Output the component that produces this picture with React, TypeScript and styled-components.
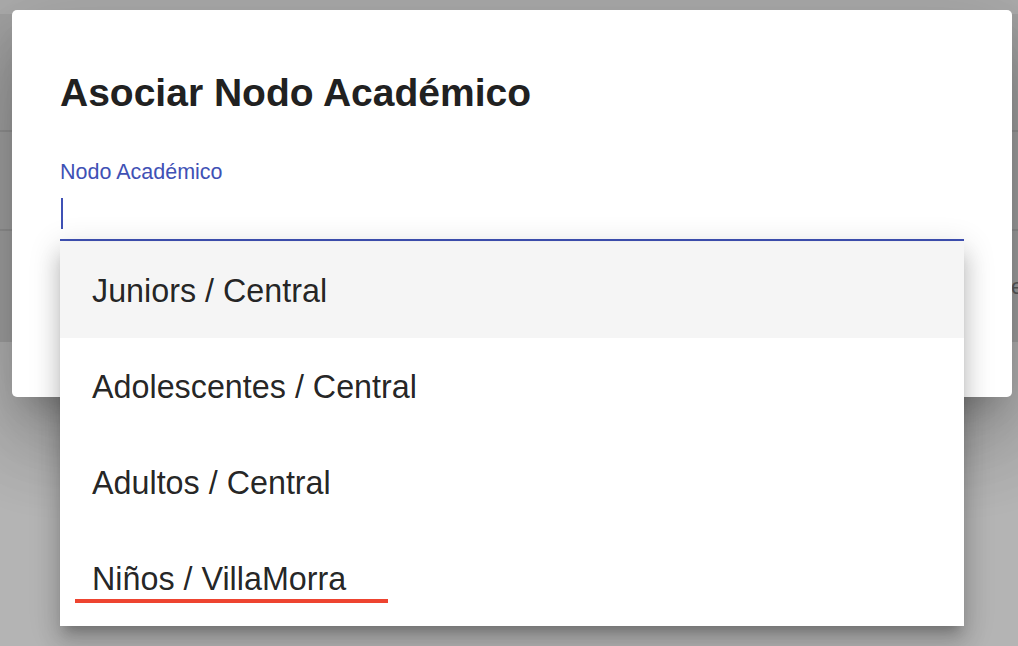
import React from "react";
import styled, { createGlobalStyle } from "styled-components";

const GlobalStyle = createGlobalStyle`
  html, body {
    margin: 0;
    padding: 0;
    width: 1018px;
    height: 646px;
    overflow: hidden;
    background: #b4b4b4;
    font-family: "Liberation Sans", Arial, Helvetica, sans-serif;
  }
  * { box-sizing: border-box; }
`;

const Screen = styled.div`
  position: relative;
  width: 1018px;
  height: 646px;
  overflow: hidden;
  background: #b4b4b4;
`;

/* Dimmed page behind the modal */
const BehindPage = styled.div`
  display: flex;
  flex-direction: column;
`;

const BehindTop = styled.div`
  height: 14px;
  background: #adadad;
`;

const BehindPanel = styled.div`
  display: flex;
  flex-direction: column;
  background: #a2a2a2;
`;

const BehindRow = styled.div<{ $h: number; $line?: boolean }>`
  height: ${(p) => p.$h}px;
  border-bottom: ${(p) => (p.$line ? "2px solid #939393" : "none")};
  display: flex;
  align-items: center;
  padding-left: 1011px;
  font-size: 22px;
  color: #5c5c5c;
  white-space: nowrap;
  overflow: hidden;
`;

/* Modal dialog */
const Dialog = styled.div`
  position: absolute;
  left: 12px;
  top: 10px;
  width: 1000px;
  height: 387px;
  background: #ffffff;
  border-radius: 5px;
  box-shadow: 0px 22px 30px -14px rgba(0, 0, 0, 0.2),
    0px 48px 76px 6px rgba(0, 0, 0, 0.14),
    0px 18px 92px 16px rgba(0, 0, 0, 0.12);
  padding: 60px 48px 0 48px;
  display: flex;
  flex-direction: column;
`;

const Title = styled.h2`
  margin: 0;
  font-size: 39px;
  line-height: 1.2;
  font-weight: 700;
  color: #212121;
`;

const Field = styled.div`
  margin-top: 45px;
  display: flex;
  flex-direction: column;
`;

const Label = styled.label`
  font-size: 21.5px;
  line-height: 1;
  color: #3f51b5;
`;

const InputBox = styled.div`
  height: 58px;
  padding-top: 15px;
  border-bottom: 2px solid #3f51b5;
  display: flex;
  align-items: flex-start;
`;

const Caret = styled.span`
  display: block;
  width: 2px;
  height: 31px;
  margin-left: 1px;
  background: #3f51b5;
`;

/* Dropdown popover */
const Menu = styled.ul`
  position: absolute;
  left: 60px;
  top: 242px;
  width: 904px;
  margin: 0;
  padding: 0;
  list-style: none;
  background: #ffffff;
  box-shadow: 0px 10px 10px -6px rgba(0, 0, 0, 0.2),
    0px 16px 20px 2px rgba(0, 0, 0, 0.14),
    0px 6px 28px 4px rgba(0, 0, 0, 0.12);
`;

const MenuItem = styled.li<{ $active?: boolean }>`
  position: relative;
  height: 96px;
  padding-left: 32px;
  padding-top: 2px;
  display: flex;
  align-items: center;
  font-size: 32.3px;
  color: rgba(0, 0, 0, 0.87);
  background: ${(p) => (p.$active ? "#f5f5f5" : "#ffffff")};
  white-space: nowrap;
`;

const Annotation = styled.span`
  position: absolute;
  left: 15px;
  top: 69px;
  width: 313px;
  height: 4px;
  background: #ee4430;
`;

const options = [
  "Juniors / Central",
  "Adolescentes / Central",
  "Adultos / Central",
  "Niños / VillaMorra",
];

export default function App() {
  return (
    <>
      <GlobalStyle />
      <Screen>
        <BehindPage>
          <BehindTop />
          <BehindPanel>
            <BehindRow $h={118} $line />
            <BehindRow $h={99} $line />
            <BehindRow $h={111}>e</BehindRow>
          </BehindPanel>
        </BehindPage>

        <Dialog>
          <Title>Asociar Nodo Académico</Title>
          <Field>
            <Label>Nodo Académico</Label>
            <InputBox>
              <Caret />
            </InputBox>
          </Field>
        </Dialog>

        <Menu>
          {options.map((o, i) => (
            <MenuItem key={o} $active={i === 0}>
              {o}
              {i === options.length - 1 && <Annotation />}
            </MenuItem>
          ))}
        </Menu>
      </Screen>
    </>
  );
}
